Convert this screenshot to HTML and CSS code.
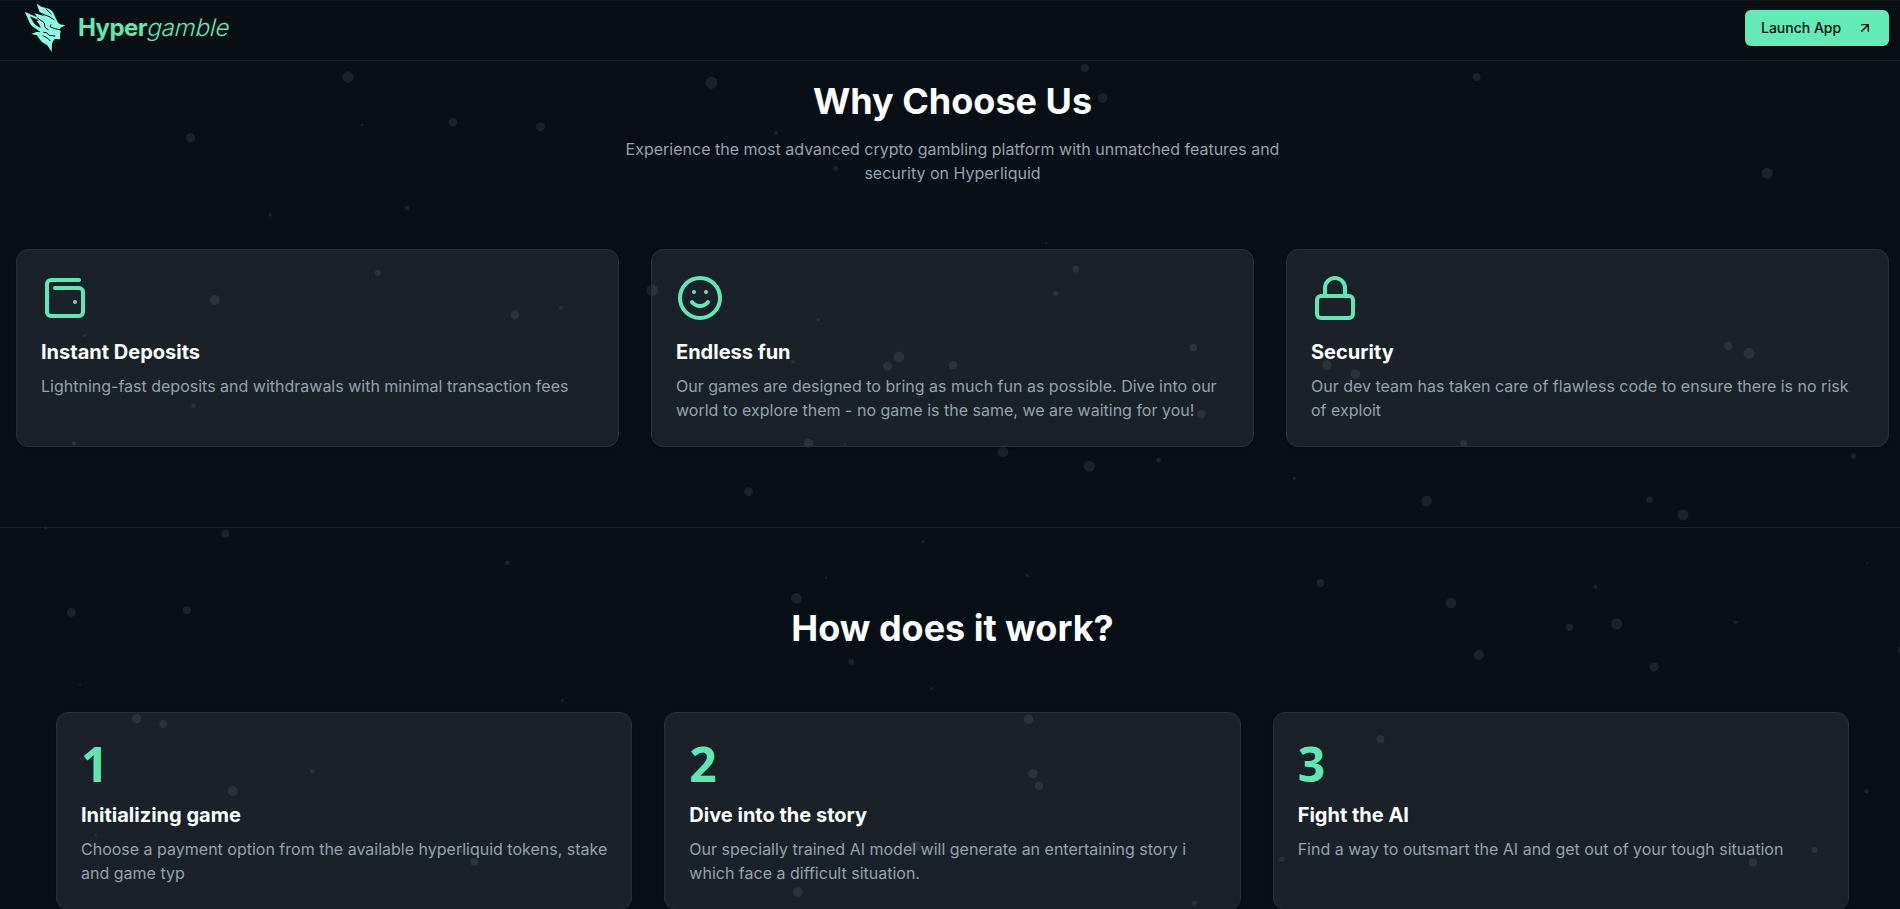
FILE: index.html
```html
<!DOCTYPE html>
<html lang="en">
<head>
<meta charset="utf-8">
<title>Hypergamble</title>
<link rel="stylesheet" href="styles.css">
</head>
<body>
<svg class="particles" id="particles" width="1900" height="909" aria-hidden="true"></svg>
<header class="header">
  <a class="brand">
    <svg class="brand-mark" viewBox="0 0 156 168" aria-hidden="true">
      <path class="mark" d="M50 11 L64 20 L86 26 Q98 31 102 43 L109 58 Q112 68 119 73 L136 76 L122 83 L117 90 L123 94 L120 101 L120 118 L104 117 L99 124 L96 132 L95 156 L82 136 L66 126 L56 114 L51 106 L34 102 L49 96 L62 96 L44 84 Q30 75 25 59 L14 35 L51 52 L44 40 L74 49 L59 37 Z"/>
      <path class="cut" d="M31 50 L55 61 L49 64 Q59 73 61 82 L57 81 Q43 75 37 60 Z"/>
      <path class="cut" d="M51 53 L72 68 L76 83 L86 90 M59 38 L90 51 L103 60 M77 26 L94 42 M93 73 L90 80 L104 86 L119 89 M70 97 L80 98 L87 106 L106 108 M68 107 L82 114 L91 123"/>
    </svg>
    <span class="brand-name"><b>Hyper</b><i>gamble</i></span>
  </a>
  <a class="launch">Launch App
    <svg width="16" height="16" viewBox="0 0 24 24" class="arrow"><path d="M7 7h10v10M7 17 17 7"/></svg>
  </a>
</header>
<main class="page">
  <section class="section">
    <div class="intro">
      <h2>Why Choose Us</h2>
      <p>Experience the most advanced crypto gambling platform with unmatched features and security on Hyperliquid</p>
    </div>
    <div class="cards">
      <article class="card">
        <svg class="icon" viewBox="0 0 24 24"><path d="M17 14h.01M7 7h12a2 2 0 0 1 2 2v10a2 2 0 0 1-2 2H5a2 2 0 0 1-2-2V5a2 2 0 0 1 2-2h14"/></svg>
        <h3>Instant Deposits</h3>
        <p>Lightning-fast deposits and withdrawals with minimal transaction fees</p>
      </article>
      <article class="card">
        <svg class="icon" viewBox="0 0 24 24"><circle cx="12" cy="12" r="10"/><path d="M8 14s1.500 2 4 2 4-2 4-2M9 9h.01M15 9h.01"/></svg>
        <h3>Endless fun</h3>
        <p>Our games are designed to bring as much fun as possible. Dive into our world to explore them - no game is the same, we are waiting for you!</p>
      </article>
      <article class="card">
        <svg class="icon" viewBox="0 0 24 24"><rect x="3" y="11" width="18" height="11" rx="2"/><path d="M7 11V7a5 5 0 0 1 10 0v4"/></svg>
        <h3>Security</h3>
        <p>Our dev team has taken care of flawless code to ensure there is no risk of exploit</p>
      </article>
    </div>
  </section>
  <section class="section">
    <div class="intro"><h2>How does it work?</h2></div>
    <div class="cards steps">
      <article class="card">
        <div class="number">1</div>
        <h3>Initializing game</h3>
        <p>Choose a payment option from the available hyperliquid tokens, stake and game typ</p>
      </article>
      <article class="card">
        <div class="number">2</div>
        <h3>Dive into the story</h3>
        <p>Our specially trained AI model will generate an entertaining story i which face a difficult situation.</p>
      </article>
      <article class="card">
        <div class="number">3</div>
        <h3>Fight the AI</h3>
        <p>Find a way to outsmart the AI and get out of your tough situation</p>
      </article>
    </div>
  </section>
</main>
<script src="particles.js"></script>
</body>
</html>
```
FILE: styles.css
```css
* { box-sizing: border-box; margin: 0; }
html, body { height: 909px; overflow: hidden; }
body {
  background: #080f16;
  color: #fff;
  font-family: Inter, "Liberation Sans", sans-serif;
  font-size: 16px;
  line-height: 24px;
}
.particles { position: absolute; top: 0; left: 0; z-index: 0; fill: rgba(255, 235, 240, 0.085); }
.page { position: relative; z-index: 1; width: 1905px; height: 909px; overflow: hidden; }
.header {
  position: absolute;
  z-index: 2;
  top: 0;
  left: 0;
  width: 1905px;
  height: 61px;
  padding: 0 16px 5px 20px;
  display: flex;
  align-items: center;
  justify-content: space-between;
  background: rgba(10, 15, 19, 0.95);
  border-top: 1px solid #10171b;
  border-bottom: 1px solid #1b2228;
}
.brand { display: flex; align-items: center; gap: 6px; }
.brand-mark { width: 52px; height: 56px; }
.mark { fill: #8ffbe4; }
.cut { fill: #0a0f14; stroke: #0a0f14; stroke-width: 1.500; }
.cut + .cut { fill: none; stroke-width: 3; }
.brand-name { font-size: 24px; line-height: 32px; letter-spacing: -0.6px; color: #5fe8b4; }
.brand-name b { font-weight: 700; }
.brand-name i { display: inline-block; margin-left: -1px; font-style: normal; font-weight: 300; letter-spacing: -0.15px; transform: skewX(-14deg); transform-origin: 0 75%; }
.launch {
  display: flex;
  align-items: center;
  justify-content: space-between;
  width: 144px;
  height: 36px;
  padding: 0 16px;
  border-radius: 6px;
  background: #62ebb7;
  color: #050a0f;
  font-size: 14px;
  font-weight: 500;
}
.arrow, .icon { fill: none; stroke: currentColor; stroke-width: 2; stroke-linecap: round; stroke-linejoin: round; }
.section { padding: 80px 16px; border-top: 1px solid #1b2228; }
.intro { display: flex; flex-direction: column; align-items: center; gap: 16px; margin-bottom: 64px; text-align: center; }
.intro h2 { font-size: 36px; line-height: 40px; font-weight: 700; }
.intro p { width: 672px; color: #94a3ad; }
.cards { display: grid; grid-template-columns: repeat(3, 1fr); gap: 32px; }
.steps { padding: 0 40px; }
.card {
  padding: 24px;
  border: 1px solid #2a3036;
  border-radius: 12px;
  background: rgba(245, 255, 255, 0.08);
  box-shadow: 0 1px 3px rgba(0, 0, 0, 0.3);
}
.icon { display: block; width: 48px; height: 48px; margin-bottom: 16px; color: #5fe8b4; }
.number { height: 48px; padding-top: 3px; margin-bottom: 16px; color: #5fe8b4; font-family: "Noto Sans", sans-serif; font-size: 48px; line-height: 48px; font-weight: 700; }
.card h3 { margin-bottom: 8px; font-size: 20px; line-height: 28px; font-weight: 700; }
.card p { color: #94a3ad; }
```
FILE: particles.js
```js
// Background particles: x, y, radius
const particles = [
  [348,77,5.7],[362.5,124.7,1.2],[453,122.3,4.4],[540.4,126.7,4.5],[190.6,137.7,4.5],[270.2,215,1.7],[407,207.7,2.3],[377.6,273,3],
  [214.7,300,5],[515,315,4.4],[560.8,307.7,2],[84.5,335.7,1.6],[711.6,82.7,6],[1084.8,68,4],[1102.7,98,4.8],[775.9,133,2],
  [980.8,118.7,1.5],[835.7,168.3,2.6],[1046,243.3,1],[1075.9,269,3.4],[1055.8,293.7,2.7],[652.2,290.3,5.8],[818.3,319.7,1.6],
  [1193.3,347.7,3.8],[899,357,5.4],[887.5,366.3,4.4],[953,365.3,4.2],[792.9,361.7,1.7],[1001.8,380,1.5],[1192.9,380,1.5],
  [1476.7,77,4],[1767.3,173.3,5.6],[1728.2,346,4.3],[1749,353.3,5.5],[1326.9,365,4.7],[1355.5,374,4.8],[1463.7,443.3,3.4],
  [193.5,405.7,2.3],[73.9,443.3,2],[45.7,527.7,1.8],[225.3,533.7,4],[507.3,562.7,2.5],[71.4,612.3,4.5],[186.9,610.3,4],
  [1201.3,414.3,4.3],[808.5,443.7,4.8],[844.6,443.7,1],[1003,451.7,5.4],[1089.3,466.3,5.6],[1158.5,460.3,2.4],[1294.2,478.3,1.6],
  [748.7,491.7,4.4],[923.2,541.7,1.4],[1027.2,575.3,1.6],[825.9,578,1.1],[796.4,598.3,5.4],[851.3,661.7,3],[931.7,688.3,1.6],
  [1853.5,456,2.8],[1426.5,501,5.4],[1649.4,499.7,3.3],[1682.9,515,5.6],[1867.3,563.3,1],[1320.4,583,3.9],[1451,603,5.2],
  [1595.5,586.7,2],[1569.4,627.3,3.6],[1616.7,624,5.7],[1735.9,622.3,1.9],[1478.8,655,5.1],[1654.3,667,4.6],[1902,649.7,4],
  [80,684.7,1],[562.3,700.3,1.6],[136.8,718.7,4.6],[163.3,724,4],[312.3,771.3,2.3],[232.7,791,5],[95.5,835.3,1.3],[474.3,861.7,4],
  [460.9,850.7,2],[1028.4,719.3,4.8],[1032.9,773.7,4.8],[1039,785.7,4.2],[915.7,846.3,5.5],[797.8,892,4.8],[1194.5,903.3,2.4],
  [1380.4,739.3,4],[1866.5,791.3,2.2],[1282,859.3,2.7],[1753,862.7,4.1],[1814.7,850,3]
];
const layer = document.getElementById("particles");
for (const [x, y, r] of particles) {
  const dot = document.createElementNS("http://www.w3.org/2000/svg", "circle");
  dot.setAttribute("cx", x);
  dot.setAttribute("cy", y);
  dot.setAttribute("r", r);
  layer.appendChild(dot);
}
```
